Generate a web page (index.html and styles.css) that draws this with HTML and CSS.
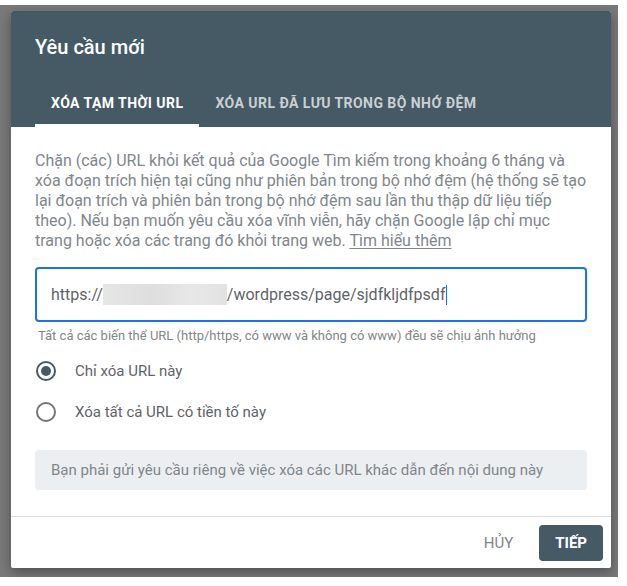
FILE: index.html
```html
<!DOCTYPE html>
<html lang="vi">
<head>
<meta charset="utf-8">
<link rel="stylesheet" href="styles.css">
</head>
<body>
<div class="backdrop">
  <div class="dialog">
    <div class="header">
      <h1 class="title">Yêu cầu mới</h1>
      <div class="tabs">
        <div class="tab active">XÓA TẠM THỜI URL</div>
        <div class="tab">XÓA URL ĐÃ LƯU TRONG BỘ NHỚ ĐỆM</div>
      </div>
    </div>
    <div class="body">
      <p class="desc">Chặn (các) URL khỏi kết quả của Google Tìm kiếm trong khoảng 6 tháng và xóa đoạn trích hiện tại cũng như phiên bản trong bộ nhớ đệm (hệ thống sẽ tạo lại đoạn trích và phiên bản trong bộ nhớ đệm sau lần thu thập dữ liệu tiếp theo). Nếu bạn muốn yêu cầu xóa vĩnh viễn, hãy chặn Google lập chỉ mục trang hoặc xóa các trang đó khỏi trang web. <a class="link" href="#">Tìm hiểu thêm</a></p>
      <div class="input">
        <span>https://</span><span class="blur"></span><span>/wordpress/page/sjdfkljdfpsdf</span><span class="caret"></span>
      </div>
      <div class="hint">Tất cả các biến thể URL (http/https, có www và không có www) đều sẽ chịu ảnh hưởng</div>
      <div class="radios">
        <label class="radio"><span class="ring checked"><span class="dot"></span></span><span>Chỉ xóa URL này</span></label>
        <label class="radio"><span class="ring"></span><span>Xóa tất cả URL có tiền tố này</span></label>
      </div>
      <div class="note">Bạn phải gửi yêu cầu riêng về việc xóa các URL khác dẫn đến nội dung này</div>
    </div>
    <div class="footer">
      <button class="btn text">HỦY</button>
      <button class="btn primary">TIẾP</button>
    </div>
  </div>
</div>
</body>
</html>
```

FILE: styles.css
```css
* { box-sizing: border-box; }
html, body { margin: 0; padding: 0; background: #fff; }
body { font-family: Roboto, "Noto Sans", sans-serif; }

.backdrop {
  margin-top: 5px;
  width: 618px;
  height: 572px;
  background: #797979;
  padding: 6px 7px 0 11px;
}

.dialog {
  width: 600px;
  height: 557px;
  background: #fff;
  border-radius: 2px;
  box-shadow: 0 4px 12px rgba(0,0,0,0.35);
  display: flex;
  flex-direction: column;
  overflow: hidden;
}

.header {
  background: #455a64;
  height: 116px;
  padding: 0 24px;
  display: flex;
  flex-direction: column;
  justify-content: space-between;
}

.title {
  margin: 24px 0 0;
  font-size: 20px;
  font-weight: 500;
  color: #fff;
  line-height: 24px;
}

.tabs { display: flex; }

.tab {
  height: 48px;
  padding: 3px 16px 0;
  display: flex;
  align-items: center;
  font-size: 14px;
  font-weight: 700;
  letter-spacing: 0.45px;
  color: rgba(255,255,255,0.72);
  border-bottom: 3px solid transparent;
}
.tab.active {
  color: #fff;
  border-bottom-color: #fff;
}

.body {
  flex: 1;
  padding: 24px 24px 0;
}

.desc {
  margin: 0;
  font-size: 16px;
  line-height: 20px;
  color: #80868b;
}
.link { color: #80868b; text-decoration: underline; text-underline-offset: 2px; }

.input {
  margin-top: 16px;
  height: 55px;
  border: 2px solid #1a73e8;
  border-radius: 4px;
  display: flex;
  align-items: center;
  padding: 0 14px;
  font-size: 16px;
  color: #5f6368;
}
.blur {
  display: inline-block;
  width: 124px;
  height: 21px;
  background: linear-gradient(90deg, #e6e6e6, #dedede 40%, #e8e8e8 70%, #e2e2e2);
}
.caret {
  display: inline-block;
  width: 1px;
  height: 20px;
  background: #1a73e8;
  margin-left: 1px;
}

.hint {
  margin: 6px 0 0 3px;
  font-size: 13px;
  line-height: 16px;
  color: #80868b;
}

.radios {
  margin-top: 6px;
  display: flex;
  flex-direction: column;
}
.radio {
  height: 41px;
  display: flex;
  align-items: center;
  gap: 19px;
  font-size: 15px;
  color: #5f6368;
}
.ring {
  width: 20px;
  height: 20px;
  border-radius: 50%;
  border: 2px solid #757575;
  display: flex;
  align-items: center;
  justify-content: center;
  margin-left: 1px;
}
.ring.checked { border-color: #455a64; }
.dot {
  width: 10px;
  height: 10px;
  border-radius: 50%;
  background: #455a64;
}

.note {
  margin-top: 18px;
  height: 40px;
  background: #eceff1;
  border-radius: 4px;
  padding: 0 16px;
  display: flex;
  align-items: center;
  font-size: 15px;
  color: #80868b;
}

.footer {
  height: 52px;
  border-top: 1px solid #e0e0e0;
  display: flex;
  justify-content: flex-end;
  align-items: center;
  gap: 10px;
  padding: 0 8px 0 0;
}
.btn {
  font-family: Roboto, "Noto Sans", sans-serif;
  font-size: 15px;
  border: none;
  border-radius: 4px;
  height: 36px;
  padding: 0 16px;
  cursor: pointer;
}
.btn.text { background: transparent; color: #80868b; }
.btn.primary { background: #455a64; color: #fff; font-weight: 700; }
```
